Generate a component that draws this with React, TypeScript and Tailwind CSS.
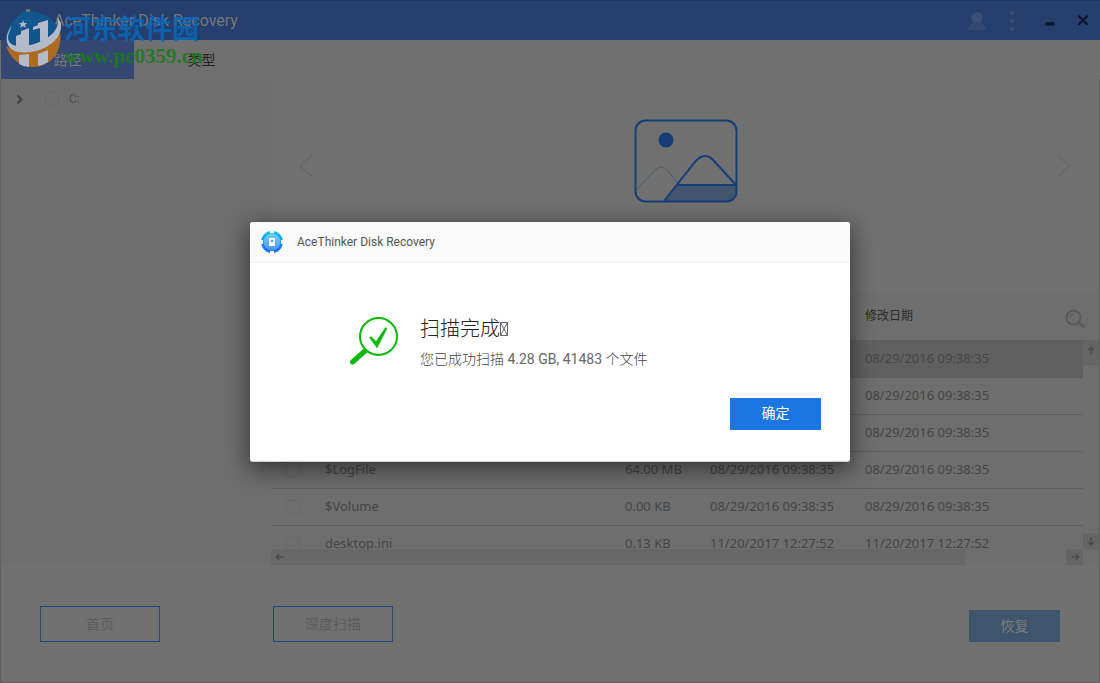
import type { ReactNode } from "react";

type FileRow = {
  name: string;
  size: string;
  created: string;
  modified: string;
};

const files: FileRow[] = [
  { name: "$BadClus", size: "0.00 KB", created: "08/29/2016 09:38:35", modified: "08/29/2016 09:38:35" },
  { name: "$Bitmap", size: "1.00 MB", created: "08/29/2016 09:38:35", modified: "08/29/2016 09:38:35" },
  { name: "$Boot", size: "8.00 KB", created: "08/29/2016 09:38:35", modified: "08/29/2016 09:38:35" },
  { name: "$LogFile", size: "64.00 MB", created: "08/29/2016 09:38:35", modified: "08/29/2016 09:38:35" },
  { name: "$Volume", size: "0.00 KB", created: "08/29/2016 09:38:35", modified: "08/29/2016 09:38:35" },
  { name: "desktop.ini", size: "0.13 KB", created: "11/20/2017 12:27:52", modified: "11/20/2017 12:27:52" },
];

type StrokeIconProps = {
  d: string;
  className?: string;
  width?: number;
};

function StrokeIcon({ d, className = "size-3", width = 2 }: StrokeIconProps) {
  return (
    <svg aria-hidden="true" className={className} fill="none" stroke="currentColor" strokeWidth={width} viewBox="0 0 24 24">
      <path d={d} />
    </svg>
  );
}

function DiskLogo({ dimmed = false }: { dimmed?: boolean }) {
  const id = dimmed ? "disk-dim" : "disk";

  return (
    <svg aria-hidden="true" className="size-6 shrink-0" viewBox="0 0 24 24">
      <defs>
        <linearGradient id={id} x1="0" x2="0" y1="0" y2="1">
          <stop offset="0" stopColor={dimmed ? "#0b5f78" : "#09c2fb"} />
          <stop offset="1" stopColor={dimmed ? "#1a4176" : "#1768f3"} />
        </linearGradient>
        <linearGradient id={`${id}-core`} x1="0" x2="0" y1="0" y2="1">
          <stop offset="0" stopColor={dimmed ? "#2f6a86" : "#74cdfd"} />
          <stop offset="1" stopColor={dimmed ? "#2a5080" : "#4a94f8"} />
        </linearGradient>
      </defs>
      <circle cx="12" cy="12" fill={`url(#${id})`} r="11" />
      <circle cx="12" cy="12" fill={`url(#${id}-core)`} r="8.500" />
      <path
        d="M10 0h4v3h-4zM10 21h4v3h-4zM0 10h3v4H0zM21 10h3v4h-3z"
        fill={dimmed ? "#707070" : "#fafafa"}
      />
      <rect fill={dimmed ? "#777" : "#fff"} height="8" rx="1" width="6" x="9" y="8" />
      <circle cx="12" cy="11" fill="#53a5f8" r="1.300" />
    </svg>
  );
}

function Watermark() {
  return (
    <div className="pointer-events-none absolute top-1 left-1 flex">
      <svg aria-hidden="true" className="h-16 w-15 shrink-0" viewBox="0 0 60 64">
        <circle cx="29" cy="35" fill="#0f5790" fillOpacity=".92" r="27" />
        <path d="M2 42c14 9 40 4 54-14 3 18-8 35-27 35C16 63 6 54 2 42z" fill="#ad6a22" />
        <path
          d="M8 22C0 30 0 46 15 48c18 3 44-9 42-28-1-3-2-5-4-7 4 12-7 21-20 26-14 5-28 5-29-5 0-4 2-8 4-12z"
          fill="#b4bac8"
        />
        <path
          d="M12 32l5-2v-3l8-3v18l-13 1zM29 23l5-2v-2l10-3v18l-8 4V24l-7 2zM15 51l10-1v13q-5 0-10-3zM34 50l10-4v12q-5 3-10 4z"
          fill="#b4bac8"
        />
        <path d="M19 16l1 3 3 0-2 2 1 3-3-2-3 2 1-3-2-2 3 0z" fill="#b4bac8" />
      </svg>
      <div className="pt-2 opacity-85">
        <p className="font-['Noto_Sans_CJK_SC',sans-serif] text-[27px] leading-8 font-bold text-[#0868ba]">河东软件园</p>
        <p className="font-['Liberation_Serif',serif] text-[21px] leading-6 font-bold text-[#1a7a1a]">www.pc0359.cn</p>
      </div>
    </div>
  );
}

function TitleBar() {
  return (
    <header className="flex h-10 items-center justify-between border-t border-[#1e345d] bg-[#263e6d] pr-2 pl-4 text-[#777]">
      <div className="flex items-center gap-3.5">
        <DiskLogo dimmed />
        <h1 className="text-base">AceThinker Disk Recovery</h1>
      </div>
      <div className="flex items-center">
        <button aria-label="Account" className="mr-[17px] text-[#35496f]">
          <svg aria-hidden="true" className="size-5" fill="currentColor" viewBox="0 0 20 20">
            <circle cx="10" cy="6.500" fill="#3c5075" r="5.500" />
            <path d="M6 11h8c0 3 5 2 5 8H1c0-6 5-5 5-8z" />
          </svg>
        </button>
        <button aria-label="Menu" className="mr-5 text-[#3b4e72]">
          <svg aria-hidden="true" className="h-5 w-4" fill="currentColor" viewBox="0 0 16 20">
            <circle cx="8" cy="2" r="2" />
            <circle cx="8" cy="10" r="2" />
            <circle cx="8" cy="18" r="2" />
          </svg>
        </button>
        <button aria-label="Minimize" className="mr-3.5 text-[#0d1526]">
          <StrokeIcon className="size-5" d="M6.500 15.500h11" width={4} />
        </button>
        <button aria-label="Close" className="text-[#0d1526]">
          <StrokeIcon className="size-[18px]" d="M6 5l12 12M18 5L6 17" width={3} />
        </button>
      </div>
    </header>
  );
}

function Preview() {
  return (
    <div className="flex h-[213px] items-start justify-between px-7">
      <button aria-label="Previous" className="mt-[75px] text-[#606060]">
        <StrokeIcon className="size-6" d="M14 1L1 12l13 11" width={1} />
      </button>
      <svg aria-hidden="true" className="ml-px mt-10 h-[84px] w-[104px]" fill="none" viewBox="0 0 104 84">
        <path d="M2 71l18-19q7-8 14 0l11 14" stroke="#4b5d76" />
        <path d="M42 66h60v6q0 10-9 10H30z" fill="#42546e" />
        <path d="M30 82l31-39q10-12 20 0l21 23M42 66h60" stroke="#153e77" strokeWidth="2" />
        <rect height="81" rx="10" stroke="#153e77" strokeWidth="2" width="101" x="1.500" y="1.500" />
        <circle cx="32" cy="21" fill="#153e77" r="7.500" />
      </svg>
      <button aria-label="Next" className="mt-[75px] text-[#606060]">
        <StrokeIcon className="size-6" d="M10 1l13 11-13 11" width={1} />
      </button>
    </div>
  );
}

function ScrollButton({ label, children, className }: { label: string; children: ReactNode; className: string }) {
  return (
    <button aria-label={label} className={`flex items-center justify-center bg-[#656565] text-[#484848] ${className}`}>
      {children}
    </button>
  );
}

function FileTable() {
  return (
    <div className="flex h-[273px] bg-[#6e6e6e]">
      <div className="flex min-w-0 flex-1 flex-col">
        <div className="min-h-0 flex-1 overflow-hidden">
          <table className="w-full table-fixed text-left">
            <colgroup>
              <col className="w-[54px]" />
              <col />
              <col className="w-[85px]" />
              <col className="w-[155px]" />
              <col className="w-[218px]" />
            </colgroup>
            <thead>
              <tr className="h-12 text-xs text-[#2b2b2b]">
                <th />
                <th className="font-normal">名称</th>
                <th className="font-normal">大小</th>
                <th className="font-normal">创建日期</th>
                <th className="font-normal">修改日期</th>
              </tr>
            </thead>
            <tbody className="font-['Noto_Sans',sans-serif] text-[13px] text-[#454545]">
              {files.map((file, index) => (
                <tr className={index === 0 ? "h-[37px] border-b border-[#5e5e5e] bg-[#606060]" : "h-[37px] border-b border-[#5e5e5e]"} key={file.name}>
                  <td className="pl-[15px]">
                    <input aria-label={file.name} className="block size-3.5 appearance-none border border-[#686868]" type="checkbox" />
                  </td>
                  <td>{file.name}</td>
                  <td>{file.size}</td>
                  <td>{file.created}</td>
                  <td>{file.modified}</td>
                </tr>
              ))}
            </tbody>
          </table>
        </div>
        <div className="flex h-4 justify-between">
          <div className="flex w-[694px] items-center bg-[#676767] pl-1 text-[#484848]">
            <StrokeIcon className="size-2.5" d="M21 12H3M10 5l-7 7 7 7" width={3} />
          </div>
          <ScrollButton className="h-4 w-[17px]" label="Scroll right">
            <StrokeIcon className="size-2.5" d="M3 12h18M14 5l7 7-7 7" width={3} />
          </ScrollButton>
        </div>
      </div>
      <div className="flex w-4 flex-col justify-between pb-4">
        <div>
          <button aria-label="Search" className="flex h-12 w-4 items-center justify-end text-[#5a5a5a]">
            <svg aria-hidden="true" className="mt-1.5 mr-3.5 size-5 shrink-0" fill="none" stroke="currentColor" strokeWidth="2" viewBox="0 0 20 20">
              <circle cx="8.500" cy="8.500" r="7" />
              <path d="M13.500 13.500l6 5" strokeWidth="2.500" />
              <path d="M5 9q0-4 4-4" strokeWidth="1" />
            </svg>
          </button>
          <ScrollButton className="h-[25px] w-4 pb-1" label="Scroll up">
            <StrokeIcon className="size-2.5" d="M12 21V3M5 10l7-7 7 7" width={3} />
          </ScrollButton>
        </div>
        <ScrollButton className="h-4 w-4" label="Scroll down">
          <StrokeIcon className="size-2.5" d="M12 3v18M5 14l7 7 7-7" width={3} />
        </ScrollButton>
      </div>
    </div>
  );
}

function ScanDialog() {
  return (
    <section
      aria-labelledby="dialog-title"
      aria-modal="true"
      className="w-[600px] rounded-[3px] border-b border-[#ccc] bg-white shadow-[0_6px_22px_2px_rgba(0,0,0,0.5)]"
      role="dialog"
    >
      <header className="flex h-[41px] items-center gap-[13px] rounded-t-[3px] border-b border-[#f0f0f0] bg-[#fafafa] px-2.5 text-[#555]">
        <DiskLogo />
        <h2 className="text-xs" id="dialog-title">AceThinker Disk Recovery</h2>
      </header>
      <div className="flex gap-[21px] pt-[54px] pl-[99px]">
        <svg aria-hidden="true" className="size-[50px]" fill="none" stroke="#0aba0a" viewBox="0 0 50 50">
          <circle cx="29.500" cy="19.500" r="18.500" strokeWidth="2" />
          <path d="M16 34L3.500 45" strokeLinecap="round" strokeWidth="5" />
          <path d="M20.500 20.500q2-2 3.500 1l3 3 9.500-14 1.500 1-10 19.500z" fill="#0aba0a" strokeWidth=".5" />
        </svg>
        <div>
          <h3 className="flex items-center text-xl leading-6 font-light text-[#222]">
            扫描完成
            <svg aria-hidden="true" className="h-3.5 w-2" fill="none" stroke="#444" strokeWidth=".8" viewBox="0 0 8 14">
              <path d="M.5.5h7v13h-7zM.5.5l7 13M7.500.5l-7 13" />
            </svg>
          </h3>
          <p className="mt-2 text-sm leading-5 font-light text-[#444]">
            您已成功扫描 <span className="font-normal text-[#666]">4.28 GB, 41483</span> 个文件
          </p>
        </div>
      </div>
      <div className="flex justify-end px-[29px] pt-[29px] pb-[31px]">
        <button className="h-8 w-[91px] bg-[#1976e2] pb-0.5 text-sm text-white">确定</button>
      </div>
    </section>
  );
}

export default function App() {
  return (
    <div className="relative flex min-h-screen flex-col bg-[#707070] font-[Roboto,'Noto_Sans_CJK_SC',sans-serif]">
      <TitleBar />
      <nav className="flex h-[39px] pl-px text-sm">
        <button className="w-[133px] bg-[#354873] text-[#777]">路径</button>
        <button className="w-[135px] text-[#222]">类型</button>
      </nav>
      <main className="flex h-[486px] border-x border-[#606060]">
        <aside className="w-[270px] shrink-0 bg-[#6e6e6e] pt-2.5 pl-[13px]">
          <label className="flex h-5 items-center text-xs text-[#505050]">
            <StrokeIcon className="mr-[19px] size-3 text-[#404040]" d="M7 5l8 8-8 8" width={4} />
            <input className="mr-2.5 size-3.5 appearance-none border border-[#696969]" type="checkbox" />
            C:
          </label>
        </aside>
        <div className="min-w-0 flex-1">
          <Preview />
          <FileTable />
        </div>
      </main>
      <footer className="flex flex-1 items-start border border-t-0 border-[#606060] px-[39px] pt-[41px] text-sm">
        <button className="h-9 w-[120px] border border-[#274679] text-[#5d5d5d]">首页</button>
        <button className="ml-[113px] h-9 w-[120px] border border-[#274679] text-[#5d5d5d]">深度扫描</button>
        <button className="mt-1 ml-auto h-8 w-[91px] bg-[#3f546d] text-[#7b7b7b]">恢复</button>
      </footer>
      <Watermark />
      <div className="absolute inset-0 flex items-center justify-center">
        <ScanDialog />
      </div>
    </div>
  );
}
